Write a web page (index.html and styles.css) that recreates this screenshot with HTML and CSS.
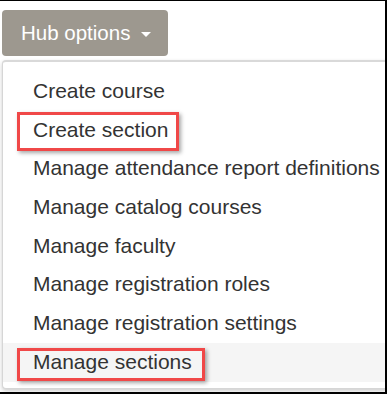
FILE: index.html
```html
<!DOCTYPE html>
<html>
<head>
<meta charset="utf-8">
<link rel="stylesheet" href="styles.css">
</head>
<body>
<div class="frame">
  <div class="dropdown">
    <button class="btn">Hub options<span class="caret"></span></button>
    <ul class="menu">
      <li class="item">Create course</li>
      <li class="item"><span class="mark mark-a"></span>Create section</li>
      <li class="item">Manage attendance report definitions</li>
      <li class="item">Manage catalog courses</li>
      <li class="item">Manage faculty</li>
      <li class="item">Manage registration roles</li>
      <li class="item">Manage registration settings</li>
      <li class="item item-active"><span class="mark mark-b"></span>Manage sections</li>
    </ul>
  </div>
</div>
</body>
</html>
```

FILE: styles.css
```css
html, body {
  margin: 0;
  padding: 0;
  background: #fff;
}
.frame {
  width: 387px;
  height: 394px;
  box-sizing: border-box;
  border-top: 1px solid #000;
  border-right: 2px solid #000;
  border-bottom: 2px solid #000;
  padding: 9px 0 0 2px;
  overflow: hidden;
  font-family: "Liberation Sans", Arial, sans-serif;
}
.dropdown {
  display: flex;
  flex-direction: column;
  align-items: flex-start;
}
.btn {
  display: inline-flex;
  align-items: center;
  gap: 11px;
  height: 46px;
  padding: 0 17px 0 19px;
  margin: 0;
  border: none;
  border-radius: 4px;
  background: #9d988f;
  color: #fff;
  font-family: "Liberation Sans", Arial, sans-serif;
  font-size: 20.5px;
}
.caret {
  width: 0;
  height: 0;
  border-left: 5px solid transparent;
  border-right: 5px solid transparent;
  border-top: 5px solid #fff;
  margin-top: 2px;
}
.menu {
  list-style: none;
  margin: 4px 0 0 0;
  padding: 10px 0 6px 0;
  width: 400px;
  box-sizing: border-box;
  background: #fff;
  border: 1px solid #d6d6d6;
  border-top: 2px solid #d9d9d9;
  border-radius: 4px;
  box-shadow: 0 2px 4px rgba(0,0,0,0.2);
}
.item {
  position: relative;
  height: 38.7px;
  line-height: 38.7px;
  padding-left: 30px;
  font-size: 21px;
  color: #333;
  white-space: nowrap;
}
.item-active {
  background: #f5f5f5;
}
.mark {
  position: absolute;
  left: 14px;
  border: 3px solid #f04848;
  box-sizing: border-box;
  box-shadow: 2px 2px 4px rgba(0,0,0,0.35);
}
.mark-a {
  top: 1.5px;
  width: 162px;
  height: 39px;
}
.mark-b {
  top: 5.5px;
  width: 188px;
  height: 33px;
}
```
